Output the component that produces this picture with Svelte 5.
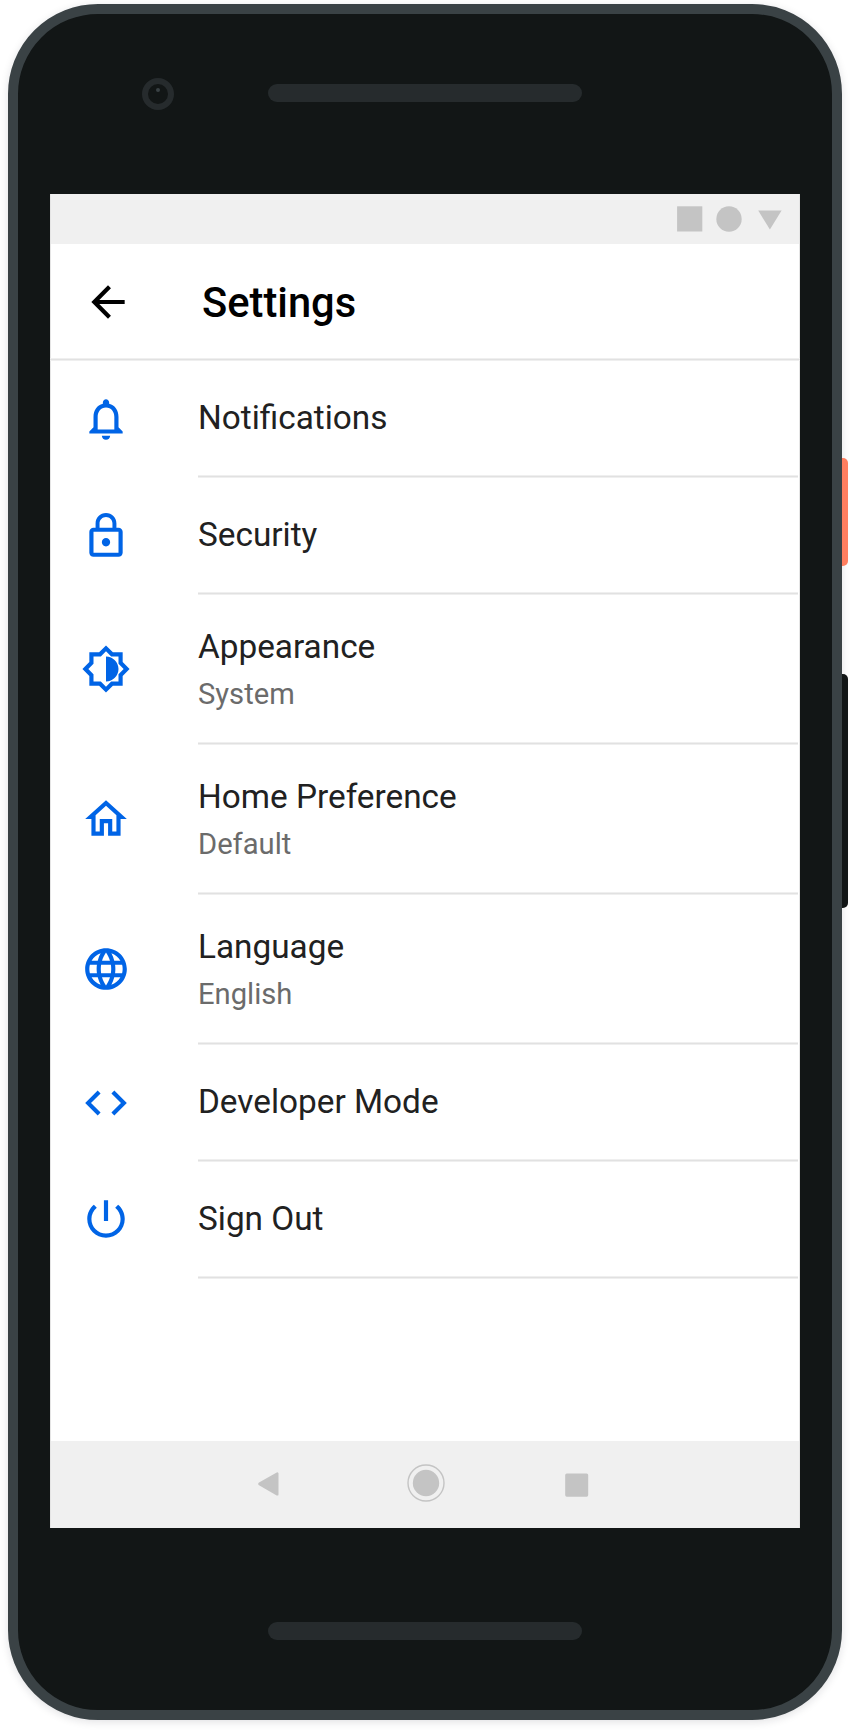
<script>
  const items = [
    {
      title: 'Notifications',
      icon: 'M12 22c1.1 0 2-.9 2-2h-4c0 1.1.9 2 2 2zm6-6v-5c0-3.07-1.63-5.64-4.5-6.32V4c0-.83-.67-1.5-1.5-1.5s-1.5.67-1.5 1.5v.68C7.64 5.36 6 7.92 6 11v5l-2 2v1h16v-1l-2-2zm-2 1H8v-6c0-2.48 1.51-4.5 4-4.5s4 2.02 4 4.5v6z'
    },
    {
      title: 'Security',
      icon: 'M12 17c1.1 0 2-.9 2-2s-.9-2-2-2-2 .9-2 2 .9 2 2 2zm6-9h-1V6c0-2.76-2.24-5-5-5S7 3.24 7 6v2H6c-1.1 0-2 .9-2 2v10c0 1.1.9 2 2 2h12c1.1 0 2-.9 2-2V10c0-1.1-.9-2-2-2zM8.9 6c0-1.71 1.39-3.1 3.1-3.1s3.1 1.39 3.1 3.1v2H8.9V6zM18 20H6V10h12v10z'
    },
    {
      title: 'Appearance',
      value: 'System',
      icon: 'M20 8.69V4h-4.69L12 .69 8.69 4H4v4.69L.69 12 4 15.31V20h4.69L12 23.31 15.31 20H20v-4.69L23.31 12 20 8.69zm-2 5.79V18h-3.52L12 20.48 9.52 18H6v-3.52L3.52 12 6 9.52V6h3.52L12 3.52 14.48 6H18v3.52L20.48 12 18 14.48zM12 6v12c3.31 0 6-2.69 6-6s-2.69-6-6-6z'
    },
    {
      title: 'Home Preference',
      value: 'Default',
      icon: 'M12 5.69l5 4.5V18h-2v-6H9v6H7v-7.81l5-4.5M12 3L2 12h3v8h6v-6h2v6h6v-8h3L12 3z'
    },
    {
      title: 'Language',
      value: 'English',
      icon: 'M11.99 2C6.47 2 2 6.48 2 12s4.47 10 9.99 10C17.52 22 22 17.52 22 12S17.52 2 11.99 2zm6.93 6h-2.95c-.32-1.25-.78-2.45-1.38-3.56 1.84.63 3.37 1.91 4.33 3.56zM12 4.04c.83 1.2 1.48 2.53 1.91 3.96h-3.82c.43-1.43 1.08-2.76 1.91-3.96zM4.26 14C4.1 13.36 4 12.69 4 12s.1-1.36.26-2h3.38c-.08.66-.14 1.32-.14 2s.06 1.34.14 2H4.26zm.82 2h2.95c.32 1.25.78 2.45 1.38 3.56-1.84-.63-3.37-1.9-4.33-3.56zm2.95-8H5.08c.96-1.66 2.49-2.93 4.33-3.56C8.81 5.55 8.35 6.75 8.03 8zM12 19.96c-.83-1.2-1.48-2.53-1.91-3.96h3.82c-.43 1.43-1.08 2.76-1.91 3.96zM14.34 14H9.66c-.09-.66-.16-1.32-.16-2s.07-1.35.16-2h4.68c.09.65.16 1.32.16 2s-.07 1.34-.16 2zm.25 5.56c.6-1.11 1.06-2.31 1.38-3.56h2.95c-.96 1.65-2.49 2.93-4.33 3.56zM16.36 14c.08-.66.14-1.32.14-2s-.06-1.34-.14-2h3.38c.16.64.26 1.31.26 2s-.1 1.36-.26 2h-3.38z'
    },
    {
      title: 'Developer Mode',
      icon: 'M9.4 16.6L4.8 12l4.6-4.6L8 6l-6 6 6 6 1.4-1.4zm5.2 0l4.6-4.6-4.6-4.6L16 6l6 6-6 6-1.4-1.4z'
    },
    {
      title: 'Sign Out',
      icon: 'M13 3h-2v10h2V3zm4.83 2.17l-1.42 1.42C17.99 7.86 19 9.81 19 12c0 3.87-3.13 7-7 7s-7-3.13-7-7c0-2.19 1.01-4.14 2.58-5.42L6.17 5.17C4.23 6.82 3 9.26 3 12c0 4.97 4.03 9 9 9s9-4.03 9-9c0-2.74-1.23-5.18-3.17-6.83z'
    }
  ];
</script>

<div class="stage">
  <div class="phone">
    <div class="top-bezel">
      <div class="camera"><i></i></div>
      <div class="speaker"></div>
    </div>

    <div class="screen">
      <div class="status">
        <svg width="26" height="26" viewBox="0 0 26 26"><rect x=".1" y=".3" width="25.2" height="25.2" /></svg>
        <svg width="26" height="26" viewBox="0 0 26 26"><circle cx="13" cy="13" r="12.7" /></svg>
        <svg width="24" height="26" viewBox="0 0 24 26"><path d="M.2 4.4h23.4L11.9 23.6z" /></svg>
      </div>

      <header>
        <svg class="icon" viewBox="0 0 24 24"><path d="M20 11H7.83l5.59-5.59L12 4l-8 8 8 8 1.41-1.41L7.83 13H20v-2z" /></svg>
        <h1>Settings</h1>
      </header>
      <div class="line"></div>

      <ul>
        {#each items as item}
          <li class:tall={item.value}>
            <div class="lead">
              <svg class="icon" viewBox="0 0 24 24"><path d={item.icon} /></svg>
            </div>
            <div class="body">
              <div class="text">
                <span class="title">{item.title}</span>
                {#if item.value}<span class="value">{item.value}</span>{/if}
              </div>
              <div class="line"></div>
            </div>
          </li>
        {/each}
      </ul>

      <nav>
        <svg width="22" height="24" viewBox="0 0 22 24"><path d="M19.3 1.6v20.8L1.6 12.3a.4.4 0 0 1 0-.7z" stroke="#c4c4c4" stroke-width="2.4" stroke-linejoin="round" /></svg>
        <svg width="38" height="38" viewBox="0 0 38 38"><circle cx="19" cy="19" r="13.2" /><circle cx="19" cy="19" r="18" fill="none" stroke="#c4c4c4" stroke-width="1.4" /></svg>
        <svg width="24" height="24" viewBox="0 0 24 24"><rect x=".2" y=".5" width="23" height="23.2" rx="1.6" /></svg>
      </nav>
    </div>

    <div class="bottom-bezel"><div class="speaker"></div></div>
    <div class="key power"></div>
    <div class="key volume"></div>
  </div>
</div>

<style>
  :global(body) {
    background: #fff;
  }
  .stage {
    box-sizing: border-box;
    width: 850px;
    height: 1732px;
    padding: 4px 8px 12px;
    font-family: Roboto, sans-serif;
    overflow: hidden;
  }
  .phone {
    position: relative;
    box-sizing: border-box;
    width: 834px;
    height: 1716px;
    display: flex;
    flex-direction: column;
    align-items: center;
    border: 10px solid #3a4245;
    border-radius: 90px;
    background: #121616;
    box-shadow: 0 2px 8px rgba(20, 20, 40, 0.13);
  }
  .top-bezel {
    box-sizing: border-box;
    width: 100%;
    height: 180px;
    flex: none;
    display: flex;
    align-items: flex-start;
    padding: 64px 0 0 124px;
    gap: 94px;
  }
  .camera {
    box-sizing: border-box;
    width: 32px;
    height: 32px;
    border: 6px solid #262b2d;
    border-radius: 50%;
    display: flex;
    justify-content: center;
    padding-top: 4px;
  }
  .camera i {
    width: 4px;
    height: 4px;
    border-radius: 50%;
    background: #3a4245;
  }
  .speaker {
    width: 314px;
    height: 18px;
    border-radius: 9px;
    background: #262b2d;
  }
  .top-bezel .speaker {
    margin-top: 6px;
  }
  .bottom-bezel {
    padding-top: 94px;
  }
  .key {
    position: absolute;
    left: 824px;
    width: 6px;
    border-radius: 0 5px 5px 0;
  }
  .power {
    top: 444px;
    height: 108px;
    background: #ff7e5f;
  }
  .volume {
    top: 660px;
    height: 234px;
    background: #121616;
  }
  .screen {
    width: 750px;
    height: 1334px;
    flex: none;
    display: flex;
    flex-direction: column;
    background: #fff;
    box-shadow: inset 1px 0 rgba(0, 0, 0, 0.1), inset -1px 0 rgba(0, 0, 0, 0.1);
  }
  .status {
    box-sizing: border-box;
    height: 50px;
    display: flex;
    justify-content: flex-end;
    align-items: center;
    margin: 0 1px;
    padding: 0 17px 0 0;
    background: #f0f0f0;
  }
  .status svg {
    fill: #c4c4c4;
  }
  .status svg + svg {
    margin-left: 13px;
  }
  .status svg:last-child {
    margin-left: 16px;
  }
  .icon {
    display: block;
    flex: none;
    width: 50px;
    height: 50px;
  }
  header {
    height: 114px;
    display: flex;
    align-items: center;
    padding: 3px 0 0 33.4px;
    box-sizing: border-box;
  }
  header .icon {
    margin-bottom: 2px;
  }
  h1 {
    margin: 0 0 0 68.6px;
    font-size: 41.67px;
    line-height: 50px;
    font-weight: 500;
    color: #000;
  }
  .line {
    height: 3px;
    flex: none;
    background: linear-gradient(#efefef 1px, #e1e1e1 1px 2px, #efefef 2px);
  }
  ul {
    list-style: none;
    margin: 0;
    padding: 0;
  }
  li {
    display: flex;
    height: 117px;
  }
  .lead {
    box-sizing: border-box;
    width: 148px;
    padding: 32.9px 0 0 31.3px;
    fill: #0064e6;
  }
  li:last-child .lead {
    padding-top: 32.4px;
  }
  .body {
    width: 600px;
    display: flex;
    flex-direction: column;
  }
  .text {
    flex: 1;
    display: flex;
    flex-direction: column;
    padding-top: 37px;
  }
  .title {
    font-size: 33.33px;
    line-height: 40px;
    color: #212121;
  }
  .value {
    margin-top: 9px;
    font-size: 29.17px;
    line-height: 36px;
    color: #6b6b6b;
  }
  .tall {
    height: 150px;
  }
  .tall .lead {
    padding-top: 49.3px;
  }
  .tall .text {
    padding-top: 32px;
  }
  nav {
    box-sizing: border-box;
    height: 87px;
    display: flex;
    align-items: flex-start;
    margin: auto 1px 0;
    padding-left: 207px;
    background: #f0f0f0;
  }
  nav svg {
    fill: #c4c4c4;
    margin-top: 31px;
    overflow: visible;
  }
  nav svg:nth-child(2) {
    margin: 23px 0 0 126.5px;
  }
  nav svg:nth-child(3) {
    margin: 32px 0 0 120.3px;
  }
</style>
